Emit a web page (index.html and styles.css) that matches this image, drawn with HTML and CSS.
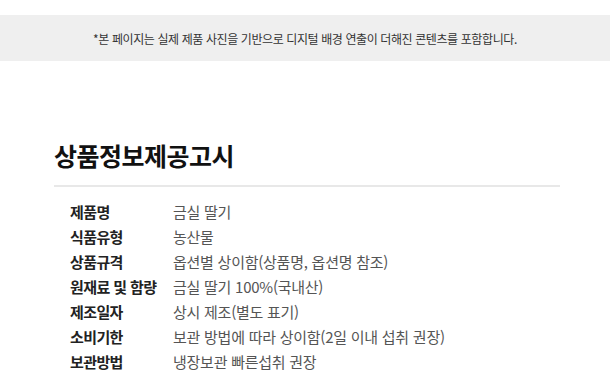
FILE: index.html
```html
<!DOCTYPE html>
<html lang="ko">
<head>
<meta charset="utf-8">
<link rel="stylesheet" href="styles.css">
</head>
<body>
<div class="notice">*본 페이지는 실제 제품 사진을 기반으로 디지털 배경 연출이 더해진 콘텐츠를 포함합니다.</div>
<section class="info">
  <h1 class="title">상품정보제공고시</h1>
  <dl class="rows">
    <dt>제품명</dt><dd>금실 딸기</dd>
    <dt>식품유형</dt><dd>농산물</dd>
    <dt>상품규격</dt><dd>옵션별 상이함(상품명, 옵션명 참조)</dd>
    <dt>원재료 및 함량</dt><dd>금실 딸기 100%(국내산)</dd>
    <dt>제조일자</dt><dd>상시 제조(별도 표기)</dd>
    <dt>소비기한</dt><dd>보관 방법에 따라 상이함(2일 이내 섭취 권장)</dd>
    <dt>보관방법</dt><dd>냉장보관 빠른섭취 권장</dd>
  </dl>
</section>
</body>
</html>
```
FILE: styles.css
```css
html, body {
  margin: 0;
  padding: 0;
  background: #fff;
  font-family: "Noto Sans CJK KR", "Noto Sans", sans-serif;
}
.notice {
  margin-top: 15px;
  height: 46px;
  background: #efefef;
  color: #333;
  font-size: 12px;
  display: flex;
  align-items: center;
  justify-content: center;
  letter-spacing: -0.4px;
}
.info {
  padding: 0 50px 0 53px;
}
.title {
  margin: 77px 0 0 1px;
  font-size: 25px;
  font-weight: 700;
  color: #111;
  line-height: 34px;
  letter-spacing: -0.5px;
  padding-bottom: 13px;
  border-bottom: 2px solid #e8e8e8;
}
.rows {
  margin: 12px 0 0 17px;
  display: grid;
  grid-template-columns: 103px 1fr;
  grid-auto-rows: 25px;
  font-size: 15px;
  align-items: center;
}
.rows dt {
  font-weight: 700;
  color: #222;
  letter-spacing: -0.6px;
}
.rows dd {
  margin: 0;
  color: #555;
  font-weight: 400;
  letter-spacing: -0.25px;
}
```
